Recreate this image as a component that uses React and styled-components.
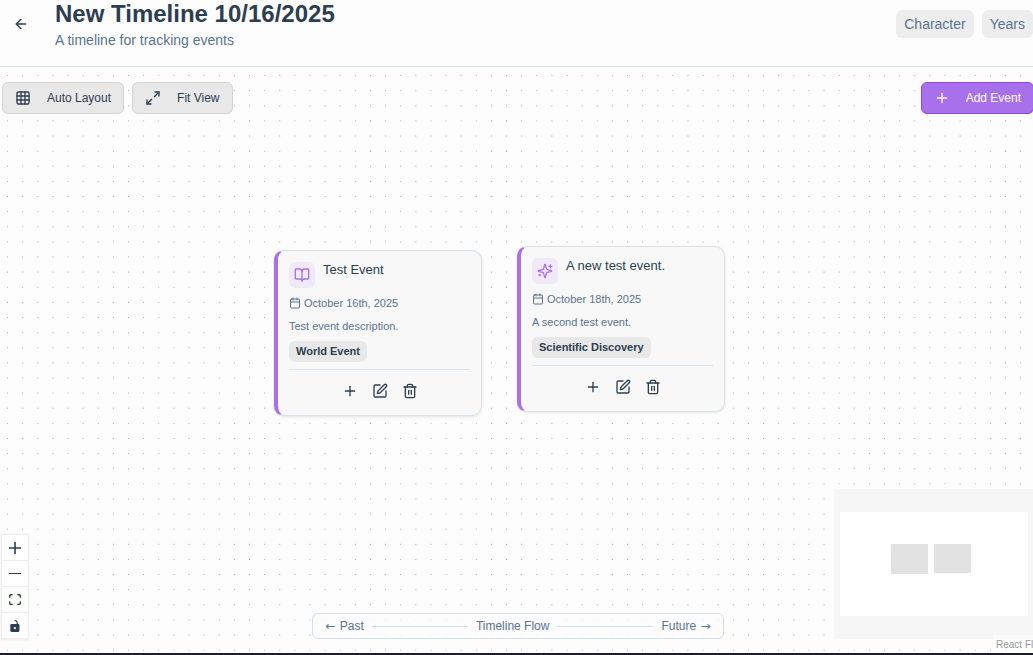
import React from "react";
import styled, { createGlobalStyle } from "styled-components";
import {
  ArrowLeft,
  BookOpen,
  Calendar,
  Grid3x3,
  Maximize2,
  Plus,
  SquarePen,
  Trash2,
} from "lucide-react";

const GlobalStyle = createGlobalStyle`
  *, *::before, *::after { box-sizing: border-box; }
  html, body, #root { height: 100%; }
  body {
    margin: 0;
    overflow: hidden;
    background: #fdfdfd;
    color: #2c3e50;
    font-family: "Liberation Sans", Arial, Helvetica, sans-serif;
    font-size: 14px;
  }
  h1, h2, p { margin: 0; }
  button { font: inherit; color: inherit; cursor: pointer; }
`;

const Page = styled.div`
  display: flex;
  flex-direction: column;
  height: 100%;
  overflow: hidden;
  border-bottom: 2px solid #1d1e2c;
`;

const Header = styled.header`
  display: flex;
  align-items: center;
  flex: none;
  margin-top: -2px;
  padding: 0 0 16px 1px;
  border-bottom: 1px solid #d6dfe9;
`;

const BackButton = styled.button`
  display: flex;
  align-items: center;
  justify-content: center;
  width: 40px;
  height: 32px;
  margin-right: 14px;
  padding: 0;
  border: 0;
  background: transparent;
`;

const Heading = styled.div`
  flex: 1;
  min-width: 0;
`;

const Title = styled.h1`
  font-size: 24px;
  line-height: 32px;
  white-space: nowrap;
`;

const Subtitle = styled.p`
  line-height: 20px;
  color: #587490;
`;

const Tags = styled.div`
  display: flex;
  gap: 8px;
`;

const Tag = styled.span`
  padding: 4px 8px;
  border-radius: 6px;
  background: #ededed;
  color: #587490;
  line-height: 20px;
`;

const Canvas = styled.main`
  position: relative;
  flex: 1;
  min-height: 0;
  overflow: hidden;
`;

const Dots = styled.svg`
  position: absolute;
  inset: 0;
  width: 100%;
  height: 100%;
`;

const Panels = styled.div`
  position: absolute;
  inset: 0 -16px 0 -13px;
  display: flex;
  flex-direction: column;
  justify-content: space-between;
  padding: 15px 15px 14px;
`;

const Toolbar = styled.div`
  display: flex;
  gap: 8px;
`;

const ToolButton = styled.button`
  display: flex;
  align-items: center;
  gap: 16px;
  height: 32px;
  margin-left: ${(p) => (p.$primary ? "auto" : "0")};
  padding: 0 12px;
  border: 1px solid ${(p) => (p.$primary ? "#9144e4" : "#d3d3d3")};
  border-radius: 6px;
  background: ${(p) => (p.$primary ? "#a871eb" : "#e8e8e8")};
  color: ${(p) => (p.$primary ? "#fdfdfd" : "#2c3e50")};
  font-size: 12px;
  white-space: nowrap;
`;

const BottomRow = styled.div`
  display: grid;
  grid-template-columns: 1fr auto 1fr;
  align-items: end;
`;

const Controls = styled.div`
  display: flex;
  flex-direction: column;
  justify-self: start;
  box-shadow: 0 0 2px 1px rgba(0, 0, 0, 0.08);
`;

const ControlButton = styled.button`
  display: flex;
  align-items: center;
  justify-content: center;
  width: 26px;
  height: 26px;
  padding: 0;
  border: 0;
  border-bottom: 1px solid #eeeeee;
  background: #fefefe;

  svg {
    width: 12px;
    max-height: 12px;
    fill: #2c3e50;
  }
`;

const Legend = styled.div`
  display: flex;
  align-items: center;
  gap: 8px;
  height: 26px;
  padding: 0 12px;
  border: 1px solid #d6dfe9;
  border-radius: 6px;
  background: rgba(253, 253, 253, 0.8);
  color: #587490;
  font-size: 12px;
  line-height: 16px;
  white-space: nowrap;
`;

const Arrow = styled.span`
  display: inline-block;
  width: 12px;
  font-family: "DejaVu Sans", sans-serif;
  text-align: center;
`;

const LegendLine = styled.span`
  width: 96px;
  height: 1px;
  background: #d6dfe9;
`;

const MiniMap = styled.svg`
  display: block;
  justify-self: end;
  width: 200px;
  height: 150px;
  background: #ffffff;
`;

const Attribution = styled.a`
  position: absolute;
  right: -16px;
  bottom: 0;
  padding: 3px 3px 1px;
  background: rgba(255, 255, 255, 0.5);
  color: #999999;
  font-size: 10px;
  line-height: 14px;
  text-decoration: none;
  white-space: nowrap;
`;

const Card = styled.article`
  position: absolute;
  left: ${(p) => p.$x}px;
  top: ${(p) => p.$y}px;
  width: 208px;
  padding: 11px;
  border: 1px solid #dbe1e8;
  border-left: 4px solid #a871eb;
  border-radius: 10px;
  background: #f8f8f8;
  box-shadow: 0 1px 3px rgba(0, 0, 0, 0.1);
  font-size: 11px;
  line-height: 16px;
`;

const CardHead = styled.div`
  display: flex;
  gap: 8px;
`;

const CardIcon = styled.span`
  display: flex;
  align-items: center;
  justify-content: center;
  width: 26px;
  height: 26px;
  border-radius: 6px;
  background: #f0e9f8;
  color: #a871eb;
`;

const CardTitle = styled.h2`
  font-size: 13px;
  font-weight: 400;
  line-height: 16px;
`;

const CardLine = styled.p`
  display: flex;
  align-items: center;
  gap: 3px;
  margin-top: 7px;
  color: #587490;
`;

const Category = styled.span`
  display: block;
  width: fit-content;
  margin-top: 7px;
  padding: 0 7px;
  border-radius: 6px;
  background: #e8e8e8;
  font-weight: 700;
  line-height: 21px;
`;

const CardActions = styled.div`
  display: flex;
  justify-content: center;
  gap: 4px;
  margin-top: 7px;
  padding-top: 8px;
  border-top: 1px solid #dde3ea;
`;

const IconButton = styled.button`
  display: flex;
  align-items: center;
  justify-content: center;
  width: 26px;
  height: 26px;
  padding: 0;
  border: 0;
  background: transparent;
`;

function SparklesIcon({ size }) {
  return (
    <svg
      width={size}
      height={size}
      viewBox="0 0 24 24"
      fill="none"
      stroke="currentColor"
      strokeWidth="2"
      strokeLinecap="round"
      strokeLinejoin="round"
      aria-hidden="true"
    >
      <path d="M9.937 15.5A2 2 0 0 0 8.5 14.063l-6.135-1.582a.5.5 0 0 1 0-.962L8.5 9.936A2 2 0 0 0 9.937 8.5l1.582-6.135a.5.5 0 0 1 .963 0L14.063 8.5A2 2 0 0 0 15.5 9.937l6.135 1.581a.5.5 0 0 1 0 .964L15.5 14.063a2 2 0 0 0-1.437 1.437l-1.582 6.135a.5.5 0 0 1-.963 0z" />
      <path d="M20 3v4" />
      <path d="M22 5h-4" />
      <path d="M4 17v2" />
      <path d="M5 18H3" />
    </svg>
  );
}

const events = [
  {
    x: 274,
    y: 183,
    icon: BookOpen,
    title: "Test Event",
    date: "October 16th, 2025",
    text: "Test event description.",
    category: "World Event",
  },
  {
    x: 517,
    y: 179,
    icon: SparklesIcon,
    title: "A new test event.",
    date: "October 18th, 2025",
    text: "A second test event.",
    category: "Scientific Discovery",
  },
];

function EventCard({ event }) {
  const Icon = event.icon;
  return (
    <Card $x={event.x} $y={event.y}>
      <CardHead>
        <CardIcon>
          <Icon size={16} />
        </CardIcon>
        <CardTitle>{event.title}</CardTitle>
      </CardHead>
      <CardLine>
        <Calendar size={12} />
        {event.date}
      </CardLine>
      <CardLine>{event.text}</CardLine>
      <Category>{event.category}</Category>
      <CardActions>
        <IconButton aria-label="Add linked event">
          <Plus size={16} />
        </IconButton>
        <IconButton aria-label="Edit event">
          <SquarePen size={16} />
        </IconButton>
        <IconButton aria-label="Delete event">
          <Trash2 size={16} />
        </IconButton>
      </CardActions>
    </Card>
  );
}

export default function App() {
  return (
    <>
      <GlobalStyle />
      <Page>
        <Header>
          <BackButton aria-label="Back">
            <ArrowLeft size={16} />
          </BackButton>
          <Heading>
            <Title>New Timeline 10/16/2025</Title>
            <Subtitle>A timeline for tracking events</Subtitle>
          </Heading>
          <Tags>
            <Tag>Character</Tag>
            <Tag>Years</Tag>
          </Tags>
        </Header>
        <Canvas>
          <Dots aria-hidden="true">
            <pattern
              id="dots"
              x="7.1"
              y="8.1"
              width="15.12"
              height="15.12"
              patternUnits="userSpaceOnUse"
            >
              <circle cx="0.5" cy="0.5" r="0.5" fill="#91919a" />
            </pattern>
            <rect width="100%" height="100%" fill="url(#dots)" />
          </Dots>
          <Panels>
            <Toolbar>
              <ToolButton>
                <Grid3x3 size={16} />
                Auto Layout
              </ToolButton>
              <ToolButton>
                <Maximize2 size={16} />
                Fit View
              </ToolButton>
              <ToolButton $primary>
                <Plus size={16} />
                Add Event
              </ToolButton>
            </Toolbar>
            <BottomRow>
              <Controls>
                <ControlButton aria-label="Zoom in">
                  <svg viewBox="0 0 32 32">
                    <path d="M32 18.133H18.133V32h-4.266V18.133H0v-4.266h13.867V0h4.266v13.867H32z" />
                  </svg>
                </ControlButton>
                <ControlButton aria-label="Zoom out">
                  <svg viewBox="0 0 32 5">
                    <path d="M0 0h32v4.2H0z" />
                  </svg>
                </ControlButton>
                <ControlButton aria-label="Fit view">
                  <svg viewBox="0 0 32 30">
                    <path d="M3.692 4.63c0-.53.4-.938.939-.938h5.215V0H4.708C2.13 0 0 2.054 0 4.63v5.216h3.692V4.631zM27.354 0h-5.2v3.692h5.17c.53 0 .984.4.984.939v5.215H32V4.631A4.624 4.624 0 0027.354 0zm.954 24.83c0 .532-.4.94-.939.94h-5.215v3.768h5.215c2.577 0 4.631-2.13 4.631-4.707v-5.139h-3.692v5.139zm-23.677.94c-.531 0-.939-.4-.939-.94v-5.138H0v5.139c0 2.577 2.13 4.707 4.708 4.707h5.138V25.77H4.631z" />
                  </svg>
                </ControlButton>
                <ControlButton aria-label="Toggle interactivity">
                  <svg viewBox="0 0 25 32">
                    <path d="M21.333 10.667H19.81V7.619C19.81 3.429 16.38 0 12.19 0c-4.114 1.828-1.37 2.133.305 2.438 1.676.305 4.42 2.59 4.42 5.181v3.048H3.047A3.056 3.056 0 000 13.714v15.238A3.056 3.056 0 003.048 32h18.285a3.056 3.056 0 003.048-3.048V13.714a3.056 3.056 0 00-3.048-3.047zM12.19 24.533a3.056 3.056 0 01-3.047-3.047 3.056 3.056 0 013.047-3.048 3.056 3.056 0 013.048 3.048 3.056 3.056 0 01-3.048 3.047z" />
                  </svg>
                </ControlButton>
              </Controls>
              <Legend>
                <span>
                  <Arrow>←</Arrow> Past
                </span>
                <LegendLine />
                <span>Timeline Flow</span>
                <LegendLine />
                <span>
                  Future <Arrow>→</Arrow>
                </span>
              </Legend>
              <MiniMap viewBox="0 0 200 150" role="img" aria-label="Mini map">
                <rect x="57" y="55" width="37" height="30" rx="1" fill="#e2e2e2" />
                <rect x="100" y="55" width="37" height="29" rx="1" fill="#e2e2e2" />
                <path
                  d="M0 0H200V150H0ZM6 23V127H194V23Z"
                  fill="#f6f6f6"
                  fillRule="evenodd"
                />
              </MiniMap>
            </BottomRow>
          </Panels>
          {events.map((event) => (
            <EventCard key={event.title} event={event} />
          ))}
          <Attribution href="https://reactflow.dev">React Flow</Attribution>
        </Canvas>
      </Page>
    </>
  );
}
